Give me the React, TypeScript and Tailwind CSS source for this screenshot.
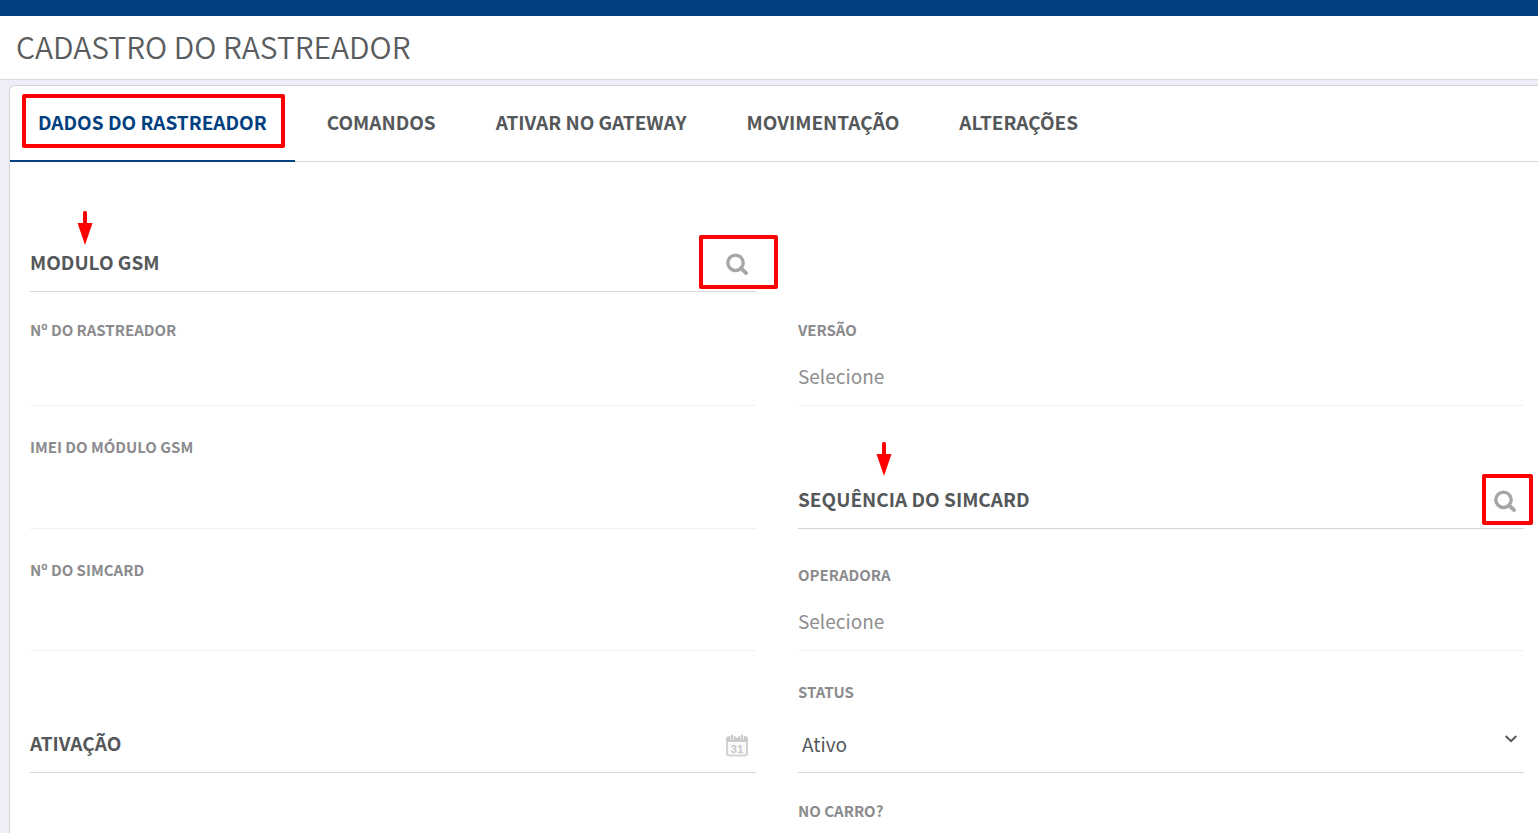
import type { ReactNode } from "react";

const tabs = ["DADOS DO RASTREADOR", "COMANDOS", "ATIVAR NO GATEWAY", "MOVIMENTAÇÃO", "ALTERAÇÕES"];

function SearchIcon() {
  return (
    <svg width="22" height="22" viewBox="0 0 22 22" fill="none" stroke="#a6a6a9" aria-hidden="true">
      <circle cx="9.5" cy="9.8" r="7.7" strokeWidth="3.4" />
      <path d="M15 15.4 20 20" strokeWidth="3.8" strokeLinecap="round" />
    </svg>
  );
}

function CalendarIcon() {
  return (
    <svg width="22" height="24" viewBox="0 0 22 24" aria-hidden="true">
      <rect x="1" y="4" width="20" height="18.5" rx="2.5" fill="#fafafa" stroke="#d2d2d2" strokeWidth="2" />
      <path d="M0.500 9V6A2.500 2.500 0 0 1 3 3.500H19A2.500 2.500 0 0 1 21.500 6V9Z" fill="#cacaca" />
      <path d="M6 2V5M11 2V3M16 2V5" stroke="#fff" strokeWidth="3.5" strokeLinecap="round" />
      <path d="M6 2.500V5.500M16 2.500V5.500" stroke="#c8c8c8" strokeWidth="2" strokeLinecap="round" />
      <text x="11" y="19.500" textAnchor="middle" fontSize="11.500" fontWeight="700" fontFamily="'Liberation Sans', sans-serif" fill="#c8c8c8">
        31
      </text>
    </svg>
  );
}

function Arrow({ className }: { className: string }) {
  return (
    <svg className={`absolute ${className}`} width="16" height="34" viewBox="0 0 16 34" fill="#ff0000" aria-hidden="true">
      <rect x="6" y="0" width="4" height="14" rx="1.5" />
      <path d="M0.500 12H15.500L8 34Z" />
    </svg>
  );
}

function Highlight({ className }: { className: string }) {
  return <span className={`pointer-events-none absolute rounded-xs border-4 border-[#ff0000] ${className}`} />;
}

function LookupField({ id, label, action, children, arrow }: { id: string; label: string; action: string; children: ReactNode; arrow?: string }) {
  return (
    <div className="flex flex-col justify-end">
      <div className="relative flex h-14 items-center border-b border-[#d5d5d5]">
        <label htmlFor={id} className="pb-1 text-[19px] leading-6 font-bold text-[#55585a]">
          {label}
        </label>
        <input id={id} className="h-10 min-w-0 flex-1 px-3 text-[19px] outline-none" />
        <button type="button" aria-label={action} className="relative mr-2 flex size-[22px] items-center justify-center">
          {children}
        </button>
        {arrow && <Arrow className={arrow} />}
      </div>
    </div>
  );
}

function Field({ id, label, pad, border = "border-[#f0f0f0]", children }: { id: string; label: string; pad: string; border?: string; children: ReactNode }) {
  return (
    <div className={`flex flex-col justify-between ${pad}`}>
      <label htmlFor={id} className="text-[15px] leading-5 font-bold text-[#8b8b8e]">
        {label}
      </label>
      <div className={`relative flex h-14 items-center border-b ${border}`}>{children}</div>
    </div>
  );
}

function TextInput({ id }: { id: string }) {
  return <input id={id} className="h-full w-full text-[19px] outline-none" />;
}

function PlainSelect({ id }: { id: string }) {
  return (
    <select id={id} className="h-full w-full appearance-none bg-transparent pb-0.5 text-[19px] text-[#8f8f8f] outline-none">
      <option>Selecione</option>
    </select>
  );
}

export default function App() {
  return (
    <div className="flex h-screen flex-col overflow-hidden bg-[#eeeef8] font-['Noto_Sans_CJK_SC','Noto_Sans',sans-serif]">
      <div className="h-4 shrink-0 bg-[#004080]" />
      <header className="flex h-16 shrink-0 items-center border-b border-[#d9d9dc] bg-white px-4 pb-1">
        <h1 className="text-[30px] leading-10 font-[350] text-[#5a5c5e]">CADASTRO DO RASTREADOR</h1>
      </header>
      <main className="mt-[5px] ml-[9px] grow rounded-tl-md border-t border-l border-[#d5d5d8] bg-white">
        <nav role="tablist" className="flex h-[76px] gap-1 border-b border-[#d5d5d5]">
          {tabs.map((tab, i) => (
            <button
              key={tab}
              type="button"
              role="tab"
              aria-selected={i === 0}
              className={`relative -mb-px border-b-2 px-7 pb-0.5 text-[19px] leading-6 font-bold ${
                i === 0 ? "border-[#004080] text-[#004080]" : "border-transparent text-[#55585a]"
              }`}
            >
              {tab}
              {i === 0 && <Highlight className="top-2 right-2.5 bottom-3 left-3" />}
            </button>
          ))}
        </nav>
        <form className="grid grid-cols-2 grid-rows-[130px_114px_123px_122px_122px_60px] gap-x-[42px] pr-3.5 pl-5">
          <LookupField id="modulo" label="MODULO GSM" action="Pesquisar módulo" arrow="bottom-[46px] left-[47px]">
            <SearchIcon />
            <Highlight className="-top-[18px] -right-[30px] -bottom-3.5 -left-[27px]" />
          </LookupField>
          <div />
          <Field id="rastreador" label="Nº DO RASTREADOR" pad="pt-7">
            <TextInput id="rastreador" />
          </Field>
          <Field id="versao" label="VERSÃO" pad="pt-7">
            <PlainSelect id="versao" />
          </Field>
          <Field id="imei" label="IMEI DO MÓDULO GSM" pad="pt-[31px]">
            <TextInput id="imei" />
          </Field>
          <LookupField id="sequencia" label="SEQUÊNCIA DO SIMCARD" action="Pesquisar simcard" arrow="bottom-[52px] left-[78px]">
            <SearchIcon />
            <Highlight className="-top-4 -right-[17px] -bottom-[13px] -left-3" />
          </LookupField>
          <Field id="simcard" label="Nº DO SIMCARD" pad="pt-[31px]">
            <TextInput id="simcard" />
          </Field>
          <Field id="operadora" label="OPERADORA" pad="pt-9">
            <PlainSelect id="operadora" />
          </Field>
          <LookupField id="ativacao" label="ATIVAÇÃO" action="Abrir calendário">
            <CalendarIcon />
          </LookupField>
          <Field id="status" label="STATUS" pad="pt-[31px]" border="border-[#d5d5d5]">
            <select id="status" className="h-full w-full appearance-none bg-transparent pl-1 text-[19px] text-[#55585a] outline-none">
              <option>Ativo</option>
              <option>Inativo</option>
            </select>
            <svg className="pointer-events-none absolute top-[18px] right-[7px]" width="12" height="8" viewBox="0 0 12 8" fill="none" stroke="#55585a" strokeWidth="2" aria-hidden="true">
              <path d="M0.700 1 6 6.200 11.300 1" />
            </svg>
          </Field>
          <div />
          <div className="pt-7">
            <p className="text-[15px] leading-5 font-bold text-[#8b8b8e]">NO CARRO?</p>
          </div>
        </form>
      </main>
    </div>
  );
}
